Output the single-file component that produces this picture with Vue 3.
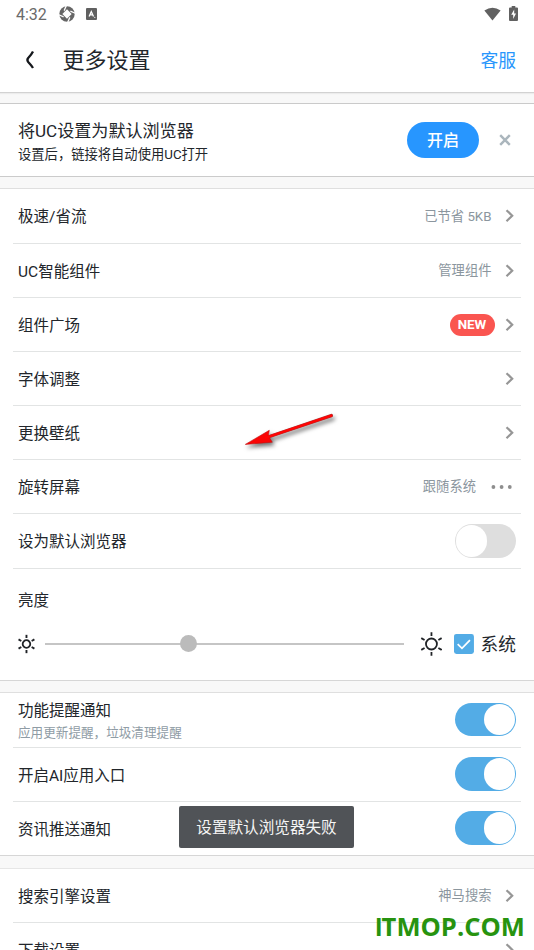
<script setup>
const rows = [
  { label: '极速/省流', value: '已节省 5KB', end: 'chev' },
  { label: 'UC智能组件', value: '管理组件', end: 'chev' },
  { label: '组件广场', badge: 'NEW', end: 'chev' },
  { label: '字体调整', end: 'chev' },
  { label: '更换壁纸', end: 'chev' },
  { label: '旋转屏幕', value: '跟随系统', end: 'dots' },
  { label: '设为默认浏览器', end: 'switch' },
]
const notices = [
  { label: '功能提醒通知', sub: '应用更新提醒，垃圾清理提醒' },
  { label: '开启AI应用入口' },
  { label: '资讯推送通知' },
]
const rays = [0, 60, 120, 180, 240, 300]
const blades = [0, 90, 180, 270]
const more = [{ label: '搜索引擎设置', value: '神马搜索' }, { label: '下载设置' }]
</script>

<template>
  <div class="screen">
    <header class="top">
      <div class="status">
        <span class="time">4:32</span>
        <svg class="aperture" width="16" height="16" viewBox="-8 -8 16 16">
          <circle r="7.7" fill="#666" />
          <path d="M0-4.8 4.6 0 0 4.8-4.6 0Z" fill="#fff" />
          <path v-for="b in blades" :key="b" d="M-.4-4.4 4.8-7.6" :transform="`rotate(${b - 35})`" stroke="#fff" stroke-width="1.3" />
        </svg>
        <svg class="abox" width="11" height="12" viewBox="0 0 11 12">
          <rect width="11" height="12" rx="1" fill="#606060" />
          <path d="M3.1 8.5 5.3 3.6 7.5 8.5M3.9 6.9H6.7" fill="none" stroke="#fff" stroke-width="1.3" />
          <circle cx="8.8" cy="9.3" r=".6" fill="#fff" />
        </svg>
        <span class="grow"></span>
        <svg class="wifi" width="17" height="14" viewBox="0 0 18 14"><path d="M.4 3.2Q9-2.6 17.6 3.2L9 13.8Z" fill="#616161" /></svg>
        <svg width="9" height="15" viewBox="0 0 9 15">
          <path d="M2.7 0H6.3V1.5H8Q9 1.5 9 2.5V14Q9 15 8 15H1Q0 15 0 14V2.5Q0 1.5 1 1.5H2.7Z" fill="#616161" />
          <path d="M5.2 3.5 2.2 8.7H4.2V13L7 7.5H5.2Z" fill="#fff" />
        </svg>
      </div>
      <div class="bar">
        <svg width="10" height="20" viewBox="0 0 10 20"><path d="M8 1.5Q6.5 4.5 3.2 8Q1.6 10 3.2 12Q6.5 15.5 8 18" fill="none" stroke="#15181c" stroke-width="2.3" /></svg>
        <h1>更多设置</h1>
        <a>客服</a>
      </div>
    </header>

    <section class="banner">
      <div class="grow btext">
        <div class="btitle">将UC设置为默认浏览器</div>
        <div class="bsub">设置后，链接将自动使用UC打开</div>
      </div>
      <button>开启</button>
      <svg width="12" height="12" viewBox="0 0 12 12"><path d="M1.2 1.2 10.8 10.8M10.8 1.2 1.2 10.8" stroke="#abb6bd" stroke-width="2.4" /></svg>
    </section>

    <section class="group first">
      <div v-for="r in rows" :key="r.label" class="row">
        <span class="label">{{ r.label }}</span>
        <span v-if="r.value" class="value">{{ r.value }}</span>
        <span v-if="r.badge" class="badge">{{ r.badge }}</span>
        <svg v-if="r.end === 'chev'" class="chev" width="10" height="14" viewBox="0 0 10 14"><path d="M1.5 1.2 7.2 6.7 1.5 12.2" fill="none" stroke="#969696" stroke-width="2.2" /></svg>
        <svg v-else-if="r.end === 'dots'" class="dots" width="22" height="4" viewBox="0 0 22 4"><g fill="#8e8e8e"><circle cx="2.4" cy="2" r="1.9" /><circle cx="10.6" cy="2" r="1.9" /><circle cx="18.8" cy="2" r="1.9" /></g></svg>
        <span v-else class="switch"><i></i></span>
      </div>
      <div class="bright">
        <div class="label">亮度</div>
        <div class="slide">
          <svg width="18" height="20" viewBox="-8.5 -10 18 20">
            <circle r="3.8" fill="none" stroke="#202327" stroke-width="1.8" />
            <path v-for="a in rays" :key="a" d="M0-6V-9.2" :transform="`rotate(${a})`" stroke="#202327" stroke-width="1.9" />
          </svg>
          <div class="track"><i></i></div>
          <svg width="22" height="24" viewBox="-11.5 -12 22 24">
            <circle r="5.5" fill="none" stroke="#202327" stroke-width="1.8" />
            <path v-for="a in rays" :key="a" d="M0-8V-11.8" :transform="`rotate(${a})`" stroke="#202327" stroke-width="1.8" />
          </svg>
          <svg class="check" width="20" height="20" viewBox="0 0 20 20"><rect width="20" height="20" rx="2.5" fill="#53ace6" /><path d="M3.7 10.2 8 14.3 16 6.2" fill="none" stroke="#fff" stroke-width="1.8" /></svg>
          <span class="sys">系统</span>
        </div>
      </div>
    </section>

    <section class="group notices">
      <div v-for="n in notices" :key="n.label" class="row">
        <div class="label">
          {{ n.label }}
          <div v-if="n.sub" class="sub">{{ n.sub }}</div>
        </div>
        <span class="switch on"><i></i></span>
      </div>
    </section>

    <section class="group last">
      <div v-for="m in more" :key="m.label" class="row">
        <span class="label">{{ m.label }}</span>
        <span v-if="m.value" class="value">{{ m.value }}</span>
        <svg class="chev" width="10" height="14" viewBox="0 0 10 14"><path d="M1.5 1.2 7.2 6.7 1.5 12.2" fill="none" stroke="#969696" stroke-width="2.2" /></svg>
      </div>
    </section>

    <svg class="arrow" width="100" height="44" viewBox="240 408 100 44">
      <path d="M331.3 415.6 268 437" stroke="#a33" stroke-width="3.4" stroke-linecap="round" />
      <path d="M245.3 444.4 269.3 430.3 268.3 435.8 272.3 442.2Z" fill="#fa0505" stroke="#c01010" stroke-width=".6" />
      <path d="M331.3 415.6 266 437.6" stroke="#ff0505" stroke-width="2.4" stroke-linecap="round" />
    </svg>
    <div class="toast">设置默认浏览器失败</div>
    <svg class="mark" width="158" height="36" viewBox="0 0 158 36"><text y="24"><tspan class="stem" x="4.2">I</tspan><tspan x="10.6" textLength="143.4" lengthAdjust="spacingAndGlyphs">TMOP.COM</tspan></text></svg>
  </div>
</template>

<style>
body { margin: 0; overflow: hidden; }
</style>
<style scoped>
.screen { position: relative; width: 534px; height: 950px; overflow: hidden; background: #f8f8f8; color: #22262b; font-family: Roboto, "Noto Sans CJK SC", sans-serif; }
.grow { flex: 1; }
.top { height: 92px; background: #fff; border-bottom: 1px solid #d2d2d2; box-shadow: 0 1px 1px #ececec; }
.status { display: flex; align-items: center; height: 27px; padding: 0 16px; }
.time { font-size: 16px; line-height: 27px; color: #6a6a6a; width: 43px; padding-top: 1px; }
.abox { margin-left: 11px; }
.wifi { margin-right: 8px; }
.status > svg:last-child { margin-right: 0; }
.bar { display: flex; align-items: center; height: 66px; padding: 0 18px 0 25px; }
h1 { flex: 1; margin: 0 0 0 27.5px; padding-top: 2px; font-size: 22px; font-weight: 400; line-height: 32px; }
.bar a { font-size: 17.8px; color: #2896fc; padding-bottom: 2px; }
.banner { display: flex; align-items: center; box-sizing: border-box; height: 74px; margin-top: 10px; padding: 0 23px 0 18px; background: #fff; border-top: 1px solid #cacaca; border-bottom: 1px solid #cbcbcb; }
.btext { padding-top: 3px; }
.btitle { font-size: 17.1px; line-height: 25px; letter-spacing: -.03px; }
.bsub { font-size: 13.3px; line-height: 21px; }
button { width: 72px; height: 36px; margin-right: 20px; padding: 0; border: 0; border-radius: 18px; background: #2796ff; color: #fff; font: 500 16px/37px Roboto, "Noto Sans CJK SC", sans-serif; }
.group { background: #fff; border-top: 1px solid #dfdfdf; border-bottom: 1px solid #d6d6d6; }
.first { margin-top: 11px; }
.row { display: flex; align-items: center; box-sizing: border-box; height: 54.1px; margin: 0 13px; padding: 0 5px; border-bottom: 1px solid #e2e4e4; }
.first .row:first-child { height: 55px; }
.label { flex: 1; padding-top: 3px; font-size: 15.5px; line-height: 23px; }
.value { font-size: 13.3px; color: #8b969e; margin-right: 13.5px; padding-bottom: 2px; }
.badge { width: 45px; height: 22px; margin-right: 10.5px; border-radius: 11px; background: #fa5550; color: #fff; font: 700 13.4px/22px Roboto, sans-serif; text-align: center; }
.chev { margin-right: 1px; }
.dots { margin: 0 3px 0 1.5px; }
.switch { display: flex; box-sizing: border-box; width: 61.5px; height: 33.5px; padding: 1px; border-radius: 17px; background: #dedede; }
.switch i { width: 31.5px; height: 31.5px; border-radius: 50%; background: #fff; }
.switch.on { justify-content: flex-end; background: #53ace6; margin-bottom: 1px; }
.bright { box-sizing: border-box; height: 111.4px; padding: 18px 18px 0; }
.slide { display: flex; align-items: center; height: 26px; margin-top: 18px; }
.track { display: flex; align-items: center; width: 360px; height: 2px; margin: 0 16px 0 9px; background: #c5c5c5; }
.track i { width: 17px; height: 17px; margin-left: 135px; border-radius: 50%; background: #bbb; }
.check { margin: 0 7px 0 12px; }
.sys { font-size: 17.7px; white-space: nowrap; padding-bottom: 1px; }
.notices { margin-top: 11px; }
.notices .row:first-child { height: 55px; }
.notices .row:last-child { border: 0; height: 53px; }
.sub { font-size: 12.6px; line-height: 20px; color: #8f9ca5; }
.last { margin-top: 12px; border-top-color: #e6e6e6; }
.arrow { position: absolute; left: 240px; top: 408px; filter: drop-shadow(2px 3px 2px rgba(0, 0, 0, .55)); }
.toast { position: absolute; left: 179px; top: 806px; width: 175px; height: 42px; border-radius: 2px; background: #505357; color: #f5f5f5; font-size: 15.6px; line-height: 45px; text-align: center; }
.mark { position: absolute; left: 371px; top: 912px; }
.mark text { font: 700 25px "Open Sans", sans-serif; fill: #27930f; }
.mark .stem { font-family: "Liberation Sans", sans-serif; }
</style>
